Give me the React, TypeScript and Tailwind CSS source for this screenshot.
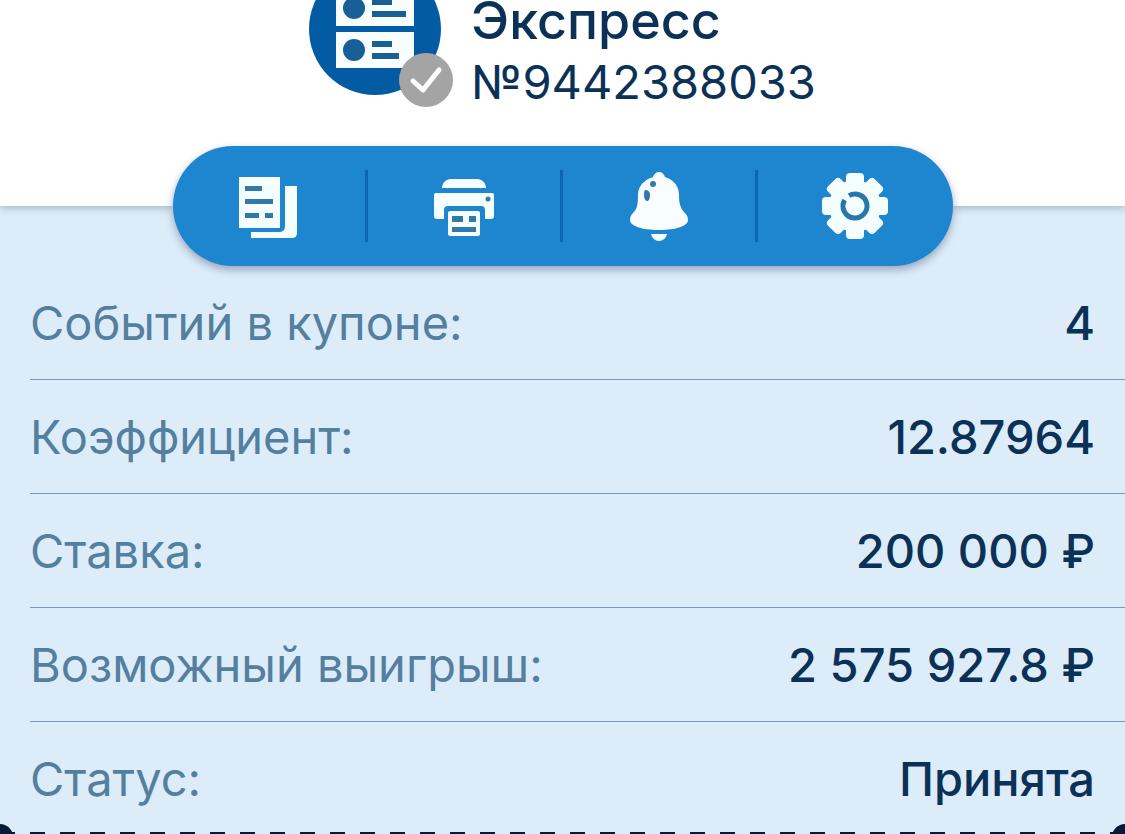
import React from 'react';

interface IconProps {
  className?: string;
}

const CouponIcon: React.FC<IconProps> = ({ className }) => (
  <svg viewBox="0 0 132 132" className={className} aria-hidden="true">
    <circle cx="66" cy="66" r="66" fill="#035ba4" />
    <path fill="#f8fdff" d="M27 27h78v36H27zM27 69h78v36H27z" />
    <g fill="#175f95">
      <circle cx="45" cy="45" r="11" />
      <circle cx="45" cy="87" r="11" />
      <path d="M63 37h20v5H63zM63 48h34v6H63zM63 78h20v6H63zM63 90h27v6H63z" />
    </g>
  </svg>
);

const CheckIcon: React.FC<IconProps> = ({ className }) => (
  <svg viewBox="0 0 54 54" className={className} aria-hidden="true">
    <circle cx="27" cy="27" r="27" fill="#a4a4a4" />
    <path d="M14 28l10 9L40 17" fill="none" stroke="#fff" strokeWidth="5" strokeLinecap="round" strokeLinejoin="round" />
  </svg>
);

const CopyIcon: React.FC<IconProps> = ({ className }) => (
  <svg viewBox="0 0 72 72" className={className} aria-hidden="true">
    <path fill="#f5feff" d="M6 7h41v51H6z" />
    <path fill="#f5feff" d="M52 16h12v47q0 5-5 5H18v-6h28q6 0 6-6z" />
    <path fill="#3279a8" d="M12 16h17v5H12zM12 29h28v5H12zM12 43h14v5H12zM32 43h8v5h-8z" />
  </svg>
);

const PrintIcon: React.FC<IconProps> = ({ className }) => (
  <svg viewBox="0 0 72 72" className={className} aria-hidden="true">
    <g fill="#f5feff">
      <path d="M14 18c0-5 4-9 9-9h26c5 0 9 4 9 9z" />
      <path d="M8 23h56q2 0 2 2v21q0 3-3 3h-6V40q0-4-4-4H20q-4 0-4 4v9H9q-3 0-3-3V25q0-2 2-2z" />
      <rect x="20" y="41" width="32" height="25" rx="2" />
    </g>
    <g fill="#3279a8">
      <circle cx="60" cy="29" r="2.5" />
      <path d="M24 46h11v6H24zM41 46h7v6h-7zM24 57h24v5H24z" />
    </g>
  </svg>
);

const BellIcon: React.FC<IconProps> = ({ className }) => (
  <svg viewBox="0 0 72 72" className={className} aria-hidden="true">
    <g fill="#f8feff">
      <path d="M36 2c3 0 5 2 6 5 9 3 14 9 14 18 0 10 2 14 6 18 2 2 3 4 3 7 0 6-12 10-29 10S7 56 7 50c0-3 1-5 3-7 4-4 5-8 5-18 0-9 6-15 15-18 1-3 3-5 6-5z" />
      <path d="M28 64h16c-1 4-4 7-8 7s-7-3-8-7z" />
    </g>
    <g fill="#3279a8">
      <circle cx="30" cy="14" r="3" />
      <path d="M22 20q5 0 5 5c0 5-2 6-3 6s-3-2-3-6q0-4 1-5z" />
    </g>
  </svg>
);

const GearIcon: React.FC<IconProps> = ({ className }) => (
  <svg viewBox="0 0 72 72" className={className} aria-hidden="true">
    <g fill="#f5feff">
      <circle cx="36" cy="36" r="26" />
      {[0, 45, 90, 135].map(angle => (
        <rect key={angle} x="27" y="3" width="18" height="66" rx="4" transform={`rotate(${angle} 36 36)`} />
      ))}
    </g>
    <path d="M30 25.6A12 12 0 1 1 25.6 30" fill="none" stroke="#2478ab" strokeWidth="5" />
  </svg>
);

const actions = [
  { label: 'Копировать', Icon: CopyIcon },
  { label: 'Печать', Icon: PrintIcon },
  { label: 'Уведомления', Icon: BellIcon },
  { label: 'Настройки', Icon: GearIcon },
];

const details = [
  { label: 'Событий в купоне:', value: '4' },
  { label: 'Коэффициент:', value: '12.87964' },
  { label: 'Ставка:', value: '200 000 ₽' },
  { label: 'Возможный выигрыш:', value: '2 575 927.8 ₽' },
  { label: 'Статус:', value: 'Принята' },
];

const App: React.FC = () => {
  return (
    <div className="h-screen overflow-hidden bg-[#dcedf9] font-['Inter','Noto_Sans',sans-serif] text-[#0c3157]">
      <header className="flex h-[206px] justify-center gap-[18px] bg-white shadow-[0_2px_8px_#a3b4c4]">
        <div className="relative -mt-[37px] h-36 w-36 flex-shrink-0">
          <CouponIcon className="h-[132px] w-[132px]" />
          <CheckIcon className="absolute right-0 bottom-0 h-[54px] w-[54px]" />
        </div>
        <div className="whitespace-nowrap">
          <h1 className="text-[52px] leading-[42px] font-medium">Экспресс</h1>
          <p className="text-[47px] leading-[80px]">№9442388033</p>
        </div>
      </header>

      <main>
        <nav className="relative mx-auto -mt-[60px] grid h-[120px] w-full max-w-[780px] grid-cols-4 items-center divide-x-3 divide-[#0c66b0] rounded-full bg-[#1e86ce] shadow-[0_4px_8px_#9aa5c0]">
          {actions.map(({ label, Icon }) => (
            <button key={label} aria-label={label} className="flex h-[72px] items-center justify-center">
              <Icon className="h-[72px] w-[72px]" />
            </button>
          ))}
        </nav>

        <dl className="pl-[30px]">
          {details.map(({ label, value }) => (
            <div
              key={label}
              className="flex h-[114px] items-center justify-between border-b border-[#7c98b8] pt-0.5 pr-[30px] text-[47px] whitespace-nowrap last:h-[110px] last:border-0 last:pt-1"
            >
              <dt className="text-[#557f9f]">{label}</dt>
              <dd className="font-medium">{value}</dd>
            </div>
          ))}
        </dl>

        {/* ticket perforation */}
        <div className="relative h-1 bg-[repeating-linear-gradient(90deg,#071a3a_0_15px,transparent_15px_30px)]">
          <span className="absolute -top-2 -left-[13px] h-[26px] w-[26px] rounded-full bg-[#071a3a]" />
          <span className="absolute -top-2 -right-[13px] h-[26px] w-[26px] rounded-full bg-[#071a3a]" />
        </div>
      </main>
    </div>
  );
};

export default App;
